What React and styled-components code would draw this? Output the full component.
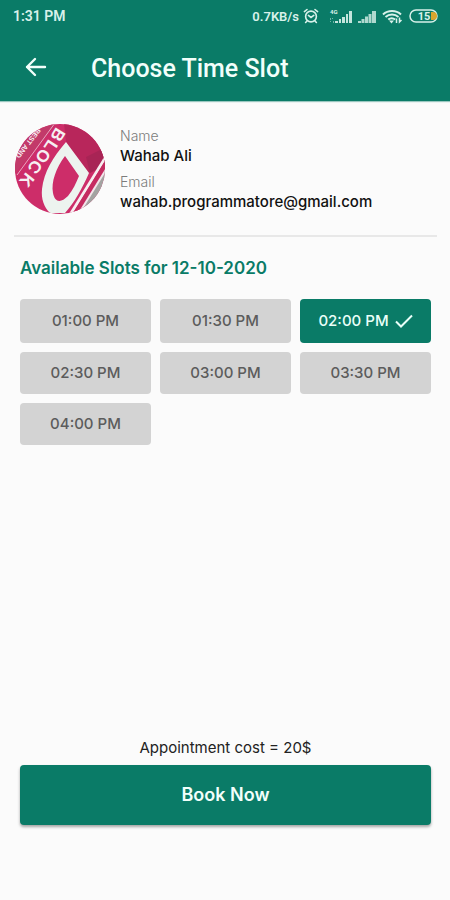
import React, { useState } from 'react'
import styled, { createGlobalStyle, css } from 'styled-components'

const GREEN = '#0a7b67'

const GlobalStyle = createGlobalStyle`
  *, *::before, *::after {
    box-sizing: border-box;
  }

  body {
    margin: 0;
    background: #fbfbfb;
    font-family: Inter, 'Noto Sans', sans-serif;
  }

  button {
    font-family: inherit;
    border: 0;
    padding: 0;
    cursor: pointer;
  }
`

const Screen = styled.div`
  display: flex;
  flex-direction: column;
  min-height: 100vh;
`

const Header = styled.header`
  background: ${GREEN};
  color: #f2fffb;
  font-family: Roboto, sans-serif;
  box-shadow: 0 1px 1px rgba(10, 123, 103, 0.4);
`

const StatusBar = styled.div`
  display: flex;
  align-items: center;
  justify-content: space-between;
  height: 32px;
  padding: 0 12px 0 13px;
  color: #d8f1ea;
  font-size: 14px;
  font-weight: 600;
`

const StatusIcons = styled.div`
  display: flex;
  align-items: center;
  gap: 6px;
  font-size: 13px;

  svg {
    display: block;
  }
`

const Network = styled.span`
  display: flex;
  align-items: center;
  gap: 4px;
  margin-right: 4px;
`

const AppBar = styled.div`
  display: flex;
  align-items: center;
  gap: 40px;
  height: 69px;
  padding: 0 20px;
`

const BackButton = styled.button`
  display: flex;
  align-items: center;
  justify-content: center;
  width: 31px;
  height: 32px;
  background: none;
  color: inherit;
`

const Title = styled.h1`
  margin: 0;
  padding-top: 4px;
  font-size: 25px;
  line-height: 32px;
  font-weight: 500;
`

const Profile = styled.section`
  display: flex;
  align-items: center;
  gap: 14px;
  margin: 0 13px 0 14px;
  padding: 22px 0 20px;
  border-bottom: 2px solid #e8e8e8;
`

const Details = styled.dl`
  display: grid;
  gap: 6px;
  margin: 0;
`

const Label = styled.dt`
  color: #7c7c7c;
  font-size: 14px;
  line-height: 20px;
  font-weight: 300;
`

const Value = styled.dd`
  margin: 0;
  color: #111;
  font-size: 15px;
  line-height: 20px;
  font-weight: 500;
`

const Slots = styled.section`
  padding: 19px 19px 0 20px;
`

const SlotsTitle = styled.h2`
  margin: 0 0 19px;
  color: ${GREEN};
  font-size: 17px;
  line-height: 24px;
  font-weight: 600;
`

const SlotGrid = styled.div`
  display: grid;
  grid-template-columns: repeat(3, 1fr);
  gap: 9px;
`

const Slot = styled.button`
  display: flex;
  align-items: center;
  justify-content: center;
  gap: 6px;
  padding: 11px 0;
  border-radius: 4px;
  background: #d3d3d3;
  color: #5c5c5c;
  font-size: 15px;
  line-height: 20px;
  font-weight: 500;

  ${({ $selected }) =>
    $selected &&
    css`
      padding: 12px 0;
      background: ${GREEN};
      color: #e9fff9;
    `}
`

const Footer = styled.footer`
  margin-top: auto;
  padding: 0 19px 75px 20px;
  text-align: center;
`

const Cost = styled.p`
  margin: 0 0 7px;
  color: #222;
  font-size: 15px;
  line-height: 20px;
`

const BookButton = styled.button`
  display: block;
  width: 100%;
  padding: 18px 0;
  border-radius: 4px;
  background: ${GREEN};
  box-shadow: 0 2px 3px rgba(0, 0, 0, 0.35);
  color: #f2fffb;
  font-size: 18px;
  line-height: 24px;
  font-weight: 600;
`

const AlarmIcon = () => (
  <svg width="16" height="16" viewBox="0 0 16 16" fill="none" stroke="currentColor" strokeWidth="1.6" strokeLinecap="round">
    <circle cx="8" cy="8.5" r="5.4" />
    <path d="M1.4 3.6 4 1.5M14.6 3.6 12 1.5M3.8 13.2 2.6 14.5M12.2 13.2l1.2 1.3M5.4 7.4 8 9.4l2.8-2" />
  </svg>
)

const LteSignalIcon = () => (
  <svg width="23" height="15" viewBox="0 0 23 15" fill="currentColor">
    <text x="1" y="5" fontSize="6" fontWeight="700">4G</text>
    <path d="M1 9h1v2H1zM3 9h1v1H3zM1 12h1v1H1zM4 12h1v2H4z" opacity=".5" />
    <path d="M6 12h3v2H6zM10 10h2v4h-2zM13 8h3v6h-3zM17 5h2v9h-2zM20 2h3v12h-3z" opacity=".9" />
  </svg>
)

const SignalIcon = () => (
  <svg width="18" height="15" viewBox="0 0 18 15" fill="currentColor">
    <path d="M0 12h3v2H0zM3.5 10h3v4h-3zM7 7.5h3V14H7zM10.5 5h3v9h-3zM14 2h4v12h-4z" opacity=".8" />
  </svg>
)

const WifiIcon = () => (
  <svg width="21" height="15" viewBox="0 0 21 15" fill="none" stroke="currentColor">
    <path d="M1 5.5c5-4.6 13-4.6 18 0M3.5 8c3.8-3.2 9.2-3.2 13 0M6.2 10.6c2.2-1.800 4.800-1.800 7 0" strokeWidth="2" />
    <path d="M7 11.5h5L9.500 14.500z" fill="currentColor" stroke="none" />
    <path d="M14.500 14V9.500M17.500 8.500V13l2-2" strokeWidth="1.500" />
  </svg>
)

const BatteryIcon = () => (
  <svg width="29" height="14" viewBox="0 0 29 14">
    <rect x="1" y="1" width="27" height="12" rx="6" fill="none" stroke="currentColor" strokeWidth="1.5" />
    <path d="M22 3h2a4 4 0 0 1 0 8h-2z" fill="#d9a62e" />
    <text x="15" y="11" fontSize="11" fontWeight="700" textAnchor="middle" fill="currentColor">15</text>
  </svg>
)

const BackIcon = () => (
  <svg width="22" height="20" viewBox="0 0 22 20" fill="none" stroke="currentColor" strokeWidth="2.4" strokeLinecap="round" strokeLinejoin="round">
    <path d="M20 10H2M10 2 2 10l8 8" />
  </svg>
)

const CheckIcon = () => (
  <svg width="18" height="14" viewBox="0 0 18 14" fill="none" stroke="currentColor" strokeWidth="2">
    <path d="m1 7.5 5 5L17 1.500" />
  </svg>
)

const badgeLetters = [
  { char: 'B', x: 44, y: 12, angle: 122 },
  { char: 'L', x: 37, y: 23, angle: 123 },
  { char: 'O', x: 29, y: 33, angle: 125 },
  { char: 'C', x: 21, y: 44, angle: 127 },
  { char: 'K', x: 13, y: 57, angle: 129 },
]

const Avatar = () => (
  <svg width="92" height="92" viewBox="0 0 92 92" role="img" aria-label="Wahab Ali">
    <defs>
      <clipPath id="avatar-clip">
        <circle cx="46" cy="46" r="45" />
      </clipPath>
    </defs>
    <g clipPath="url(#avatar-clip)">
      <rect width="92" height="92" fill="#cd2d69" />
      <path d="M50 0h42v40L75 50 52 19z" fill="#b8265b" />
      <path d="M72 34 92 24v18L76 50z" fill="#a82455" />
      <path d="M0 52V0h42z" fill="#c23a6a" />
      <path d="M3 52 41 0" stroke="#e5a9bf" strokeWidth="1" />
      <path d="M64 92 94 42v50z" fill="#a3a3a1" />
      <path d="M56 92 93 32" stroke="#f7eef0" strokeWidth="3" />
      <path d="M60 92 95 35" stroke="#c52b60" strokeWidth="4" />
      <path d="M64 92 96 40" stroke="#f3e4e9" strokeWidth="2" />
      <path
        fillRule="evenodd"
        d="M52 19 75 50C68 66 60 80 51 90H36C30 84 27 76 28 66C30 49 39 34 52 19ZM51 33C42 45 37 59 39 70C41 80 47 80 54 73C59 67 62 60 65 53Z"
        fill="#edf3ef"
      />
      <g fill="#f6f0f2" fontFamily="'Liberation Sans Narrow', 'Liberation Sans', sans-serif" fontWeight="700" textAnchor="middle">
        {badgeLetters.map(({ char, x, y, angle }) => (
          <text key={char} y="6" fontSize="17" transform={`translate(${x} ${y}) rotate(${angle})`}>
            {char}
          </text>
        ))}
        <text y="2" fontSize="7" transform="translate(14 20) rotate(128)">BEST AND</text>
      </g>
    </g>
  </svg>
)

const times = ['01:00 PM', '01:30 PM', '02:00 PM', '02:30 PM', '03:00 PM', '03:30 PM', '04:00 PM']

const App = () => {
  const [selected, setSelected] = useState('02:00 PM')

  return (
    <>
      <GlobalStyle />
      <Screen>
        <Header>
          <StatusBar>
            <span>1:31 PM</span>
            <StatusIcons>
              <Network>
                0.7KB/s
                <AlarmIcon />
              </Network>
              <LteSignalIcon />
              <SignalIcon />
              <WifiIcon />
              <BatteryIcon />
            </StatusIcons>
          </StatusBar>
          <AppBar>
            <BackButton type="button" aria-label="Back">
              <BackIcon />
            </BackButton>
            <Title>Choose Time Slot</Title>
          </AppBar>
        </Header>

        <Profile>
          <Avatar />
          <Details>
            <div>
              <Label>Name</Label>
              <Value>Wahab Ali</Value>
            </div>
            <div>
              <Label>Email</Label>
              <Value>wahab.programmatore@gmail.com</Value>
            </div>
          </Details>
        </Profile>

        <Slots>
          <SlotsTitle>Available Slots for 12-10-2020</SlotsTitle>
          <SlotGrid>
            {times.map((time) => (
              <Slot
                key={time}
                type="button"
                $selected={time === selected}
                aria-pressed={time === selected}
                onClick={() => setSelected(time)}
              >
                {time}
                {time === selected && <CheckIcon />}
              </Slot>
            ))}
          </SlotGrid>
        </Slots>

        <Footer>
          <Cost>Appointment cost = 20$</Cost>
          <BookButton type="button">Book Now</BookButton>
        </Footer>
      </Screen>
    </>
  )
}

export default App
